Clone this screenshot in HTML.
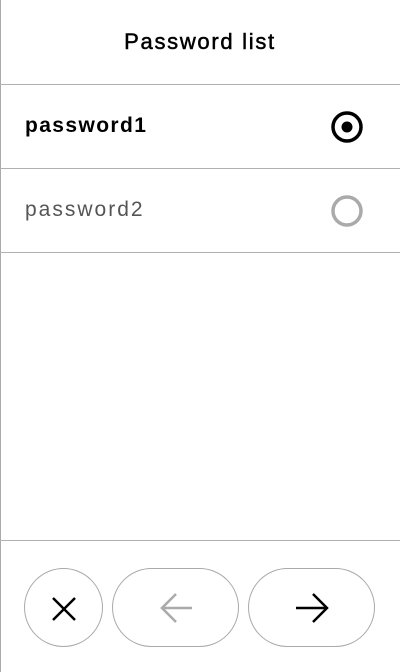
<!DOCTYPE html>
<html><head><style>
body{margin:0;width:400px;height:672px;background:#fff;font-family:"Liberation Sans",sans-serif;position:relative;overflow:hidden}
.vl{position:absolute;left:0;top:0;width:1px;height:672px;background:#aaa}
.hl{position:absolute;left:0;width:400px;height:1px;background:#b0b0b0}
.t{position:absolute;white-space:nowrap}
.btn{position:absolute;top:568px;height:79px;border:1.5px solid #aaa;border-radius:40px;box-sizing:border-box}
</style></head><body>
<div class="vl"></div>
<div class="t" style="left:0;width:400px;text-align:center;top:29px;font-size:22px;letter-spacing:1.7px;-webkit-text-stroke:0.5px #000">Password list</div>
<div class="hl" style="top:84px"></div>
<div class="t" style="left:25px;top:114px;font-size:21px;font-weight:bold;letter-spacing:1.4px">password1</div>
<svg style="position:absolute;left:330px;top:110px" width="34" height="34"><circle cx="17" cy="17" r="14" fill="none" stroke="#000" stroke-width="3.5"/><circle cx="17" cy="17" r="5.5" fill="#000"/></svg>
<div class="hl" style="top:168px"></div>
<div class="t" style="left:25px;top:198px;font-size:21px;color:#555;letter-spacing:2px">password2</div>
<svg style="position:absolute;left:330px;top:194px" width="34" height="34"><circle cx="17" cy="17" r="14" fill="none" stroke="#aaa" stroke-width="3.5"/></svg>
<div class="hl" style="top:252px"></div>
<div class="hl" style="top:540px"></div>
<div class="btn" style="left:24px;width:79px"></div>
<div class="btn" style="left:112px;width:127px"></div>
<div class="btn" style="left:248px;width:127px"></div>
<svg style="position:absolute;left:0;top:560px" width="400" height="100" fill="none" stroke-width="2.5">
<path d="M53 38L75 60M75 38L53 60" stroke="#000"/>
<path d="M192 48H162M176 34L162 48L176 62" stroke="#aaa"/>
<path d="M296 48H327M313 34L327 48L313 62" stroke="#000"/>
</svg>
</body></html>
